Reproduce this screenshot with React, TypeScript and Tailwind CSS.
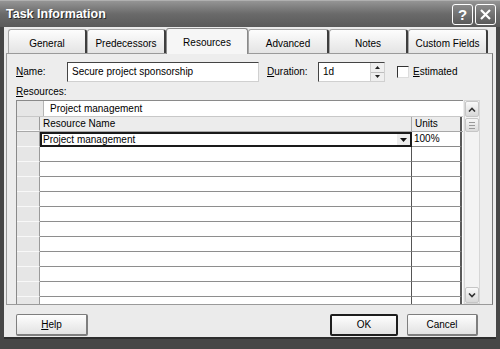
import React from "react";

const tabs = [
  { label: "General", w: "w-[79px]" },
  { label: "Predecessors", w: "w-[79px]" },
  { label: "Resources", w: "w-[82px]", active: true },
  { label: "Advanced", w: "w-[81px]" },
  { label: "Notes", w: "w-[79px]" },
  { label: "Custom Fields", w: "w-[80px]" },
];

function U({ children }: { children: React.ReactNode }) {
  return <span className="underline underline-offset-[1px]">{children}</span>;
}

function TitleBar() {
  return (
    <div className="h-[27px] shrink-0 flex items-center justify-between pl-[6px] pr-[4px] bg-linear-to-b from-[#959595] via-[#6a6a6a] to-[#5a5a5a] border-t border-[#b0b0b0]">
      <span className="text-white font-bold text-[12.5px] [text-shadow:1px_1px_0_#2a2a2a]">Task Information</span>
      <div className="flex gap-[2px]">
        <div className="w-[21px] h-[21px] rounded-[3px] border border-white bg-linear-to-b from-[#8a8a8a] to-[#5a5a5a] flex items-center justify-center text-white font-bold text-[15px] leading-none">?</div>
        <div className="w-[21px] h-[21px] rounded-[3px] border border-white bg-linear-to-b from-[#8a8a8a] to-[#5a5a5a] flex items-center justify-center">
          <svg width="13" height="13" viewBox="0 0 13 13">
            <path d="M2 2 L11 11 M11 2 L2 11" stroke="white" strokeWidth="2.2" />
          </svg>
        </div>
      </div>
    </div>
  );
}

function Tabs() {
  return (
    <div className="h-[25px] flex items-end pl-[4px] relative z-10">
      {tabs.map((t) =>
        t.active ? (
          <div
            key={t.label}
            className={`${t.w} h-[26px] -mb-[1px] bg-[#f6f6f6] border-t border-l border-r border-[#8a8a8a] rounded-t-[3px] flex items-center justify-center pt-[2px]`}
          >
            {t.label}
          </div>
        ) : (
          <div
            key={t.label}
            className={`${t.w} h-[24px] bg-linear-to-b from-[#fdfdfd] to-[#e4e4e4] border-t border-l border-[#a6a6a6] border-r-2 border-r-[#3e3e3e] rounded-t-[3px] flex items-center justify-center pt-[4px]`}
          >
            {t.label}
          </div>
        )
      )}
    </div>
  );
}

function Spinner() {
  return (
    <div className="w-[14px] h-[18px] flex flex-col border-l border-[#cfcfcf]">
      <div className="flex-1 bg-[#efefef] border-b border-[#bdbdbd] flex items-center justify-center">
        <svg width="5" height="3" viewBox="0 0 5 3"><path d="M0 3 L2.5 0 L5 3 Z" fill="#222" /></svg>
      </div>
      <div className="flex-1 bg-[#efefef] flex items-center justify-center">
        <svg width="5" height="3" viewBox="0 0 5 3"><path d="M0 0 L2.5 3 L5 0 Z" fill="#222" /></svg>
      </div>
    </div>
  );
}

function RowHead() {
  return <div className="w-[23px] shrink-0 bg-[#e6e6e6] border-r border-[#9a9a9a] border-b border-b-[#f8f8f8]" />;
}

function Grid() {
  const empty = Array.from({ length: 11 });
  return (
    <div className="flex h-[204px] mt-[2px]">
      <div className="w-[447px] h-full overflow-hidden border-l border-t border-[#8a8a8a] bg-white flex flex-col">
        <div className="h-[16px] shrink-0 flex border-b border-[#c8c8c8]">
          <div className="w-[27px] bg-[#e6e6e6] border-r border-[#b5b5b5]" />
          <div className="flex-1 pl-[6px] flex items-center">Project management</div>
        </div>
        <div className="h-[15px] shrink-0 flex border-b border-[#a8a8a8]">
          <RowHead />
          <div className="w-[372px] bg-[#ececec] border-r border-[#a8a8a8] pl-[3px] flex items-center">Resource Name</div>
          <div className="w-[50px] bg-[#ececec] border-r-2 border-r-[#5a5a5a] pl-[3px] flex items-center">Units</div>
        </div>
        <div className="h-[15px] shrink-0 flex">
          <RowHead />
          <div className="w-[372px] border-2 border-[#1a1a1a] pl-[1px] flex items-center justify-between">
            <span>Project management</span>
            <div className="w-[13px] h-[11px] bg-[#ececec] flex items-center justify-center">
              <svg width="7" height="4" viewBox="0 0 7 4"><path d="M0 0 L7 0 L3.5 4 Z" fill="#111" /></svg>
            </div>
          </div>
          <div className="w-[50px] border-r-2 border-r-[#5a5a5a] border-b border-b-[#8a8a8a] pl-[2px] flex items-center">100%</div>
        </div>
        {empty.map((_, i) => (
          <div key={i} className="h-[15px] shrink-0 flex">
            <RowHead />
            <div className="w-[372px] border-b border-b-[#8e8e8e] border-r border-r-[#555]" />
            <div className="w-[50px] border-b border-b-[#8e8e8e] border-r-2 border-r-[#5a5a5a]" />
          </div>
        ))}
      </div>
      <div className="w-[16px] ml-[1px] h-full bg-[#f3f3f3] border border-[#d6d6d6] flex flex-col">
        <div className="h-[16px] rounded-[2px] border border-[#c6c6c6] bg-linear-to-b from-[#fafafa] to-[#d8d8d8] flex items-center justify-center">
          <svg width="8" height="5" viewBox="0 0 8 5"><path d="M1 4.5 L4 1.5 L7 4.5" stroke="#333" strokeWidth="1.6" fill="none" /></svg>
        </div>
        <div className="h-[14px] mt-[1px] rounded-[2px] border border-[#c6c6c6] bg-linear-to-b from-[#f6f6f6] to-[#dcdcdc] flex flex-col items-center justify-center gap-[2px]">
          <div className="w-[6px] h-px bg-[#999]" />
          <div className="w-[6px] h-px bg-[#999]" />
          <div className="w-[6px] h-px bg-[#999]" />
        </div>
        <div className="flex-1" />
        <div className="h-[16px] rounded-[2px] border border-[#c6c6c6] bg-linear-to-b from-[#fafafa] to-[#d8d8d8] flex items-center justify-center">
          <svg width="8" height="5" viewBox="0 0 8 5"><path d="M1 0.5 L4 3.5 L7 0.5" stroke="#333" strokeWidth="1.6" fill="none" /></svg>
        </div>
      </div>
    </div>
  );
}

function Button({ children, w, def }: { children: React.ReactNode; w: string; def?: boolean }) {
  return (
    <div
      className={`${w} h-[22px] rounded-[2px] flex items-center justify-center bg-linear-to-b from-[#fefefe] to-[#e2e2e2] ${
        def ? "border-2 border-[#1e1e1e]" : "border border-[#7e7e7e] border-b-2 border-r-2"
      }`}
    >
      {children}
    </div>
  );
}

export default function App() {
  return (
    <div className="w-[500px] h-[349px] flex flex-col bg-[#474747] overflow-hidden text-[10px] leading-none text-black font-[family-name:'Liberation_Sans',Arial,sans-serif]">
      <TitleBar />
      <div className="mx-[4px] h-[312px] bg-[#ebebeb] flex flex-col border-b-2 border-[#2e2e2e]">
        <div className="pt-[1px]">
          <Tabs />
        </div>
        <div className="mx-[2px] mr-[3px] h-[252px] bg-[#ededed] border border-[#9a9a9a] border-r-[#777] pl-[9px] pt-[8px]">
          <div className="flex items-center h-[20px]">
            <span className="w-[51px]"><U>N</U>ame:</span>
            <div className="w-[192px] h-[20px] bg-white border border-[#444] border-b-[#d0d0d0] border-r-[#d0d0d0] pl-[4px] flex items-center">
              Secure project sponsorship
            </div>
            <span className="w-[51px] ml-[8px]"><U>D</U>uration:</span>
            <div className="w-[67px] h-[20px] bg-white border border-[#444] border-b-[#d0d0d0] border-r-[#d0d0d0] pl-[4px] flex items-center justify-between">
              <span>1d</span>
              <Spinner />
            </div>
            <div className="ml-[12px] w-[12px] h-[12px] bg-white border border-[#333] border-b-[#ddd] border-r-[#ddd]" />
            <span className="ml-[4px]"><U>E</U>stimated</span>
          </div>
          <div className="h-[13px] mt-[3px] flex items-center"><U>R</U>esources:</div>
          <Grid />
        </div>
        <div className="flex mt-[9px] pl-[12px]">
          <Button w="w-[72px]"><U>H</U>elp</Button>
          <div className="flex-1" />
          <Button w="w-[68px]" def>OK</Button>
          <div className="w-[9px]" />
          <Button w="w-[71px]">Cancel</Button>
          <div className="w-[18px]" />
        </div>
      </div>
    </div>
  );
}
